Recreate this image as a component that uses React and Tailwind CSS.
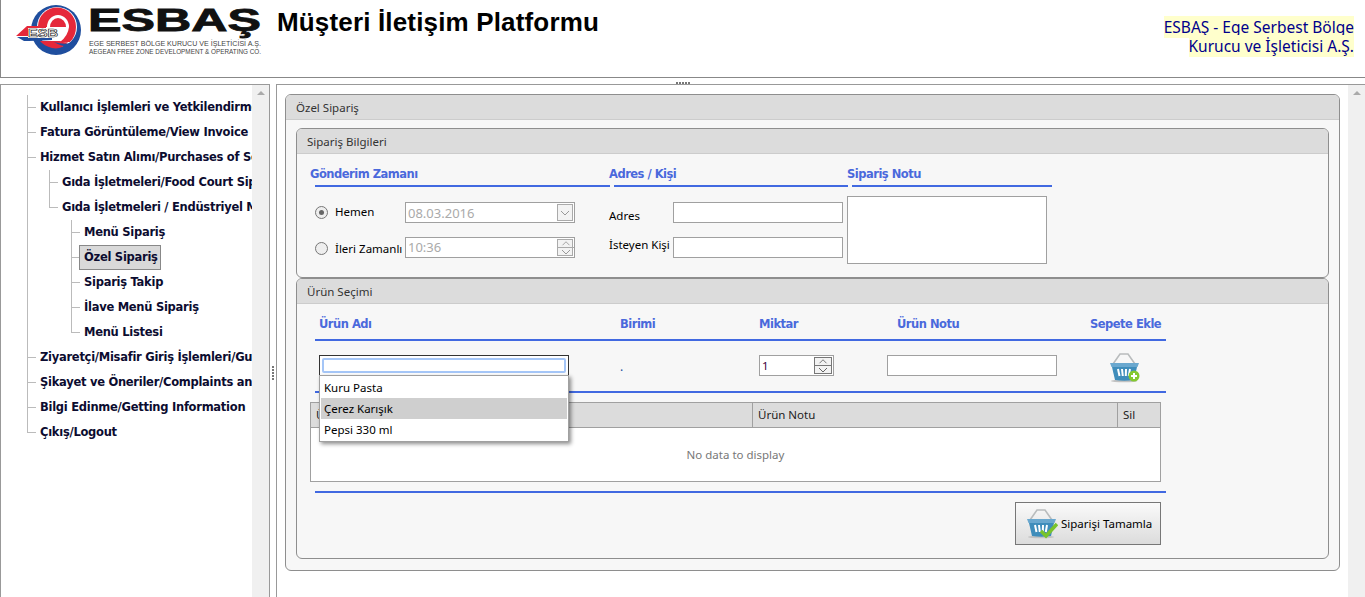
import React from "react";

const sans = "font-['Noto_Sans','Liberation_Sans',sans-serif]";

function Logo() {
  return (
    <svg width="250" height="60" viewBox="0 0 250 60" className="block">
      <circle cx="40" cy="30" r="25" fill="#1f4e9e" />
      <circle cx="41" cy="27" r="20" fill="#fff" />
      <path d="M22 26 A19 19 0 0 1 60 27 Q60 36 54 42 L44 42 Q52 36 53 27 A11 12 0 0 0 31 27 L30 27 Z" fill="#e5283a" />
      <path d="M34 27 A8 9 0 0 1 50 27 L34 27Z" fill="#e5283a" />
      <path d="M24 41 H44 Q48 43 52 42 Q46 50 36 48 Q28 46 24 41Z" fill="#e5283a" />
      <path d="M0 36 L11 26 H30 V29 H16 L12 36Z" fill="#e5283a" />
      <path d="M1 37 H36 V40 Q16 41 8 41Z" fill="#1f4e9e" />
      <path d="M38 42 Q50 46 62 41 L58 46 Q48 48 38 42Z" fill="#1f4e9e" />
      <rect x="12" y="28" width="30" height="10" fill="#fff" />
      <text x="12" y="37" fontFamily="Liberation Sans" fontWeight="700" fontSize="11" textLength="30" lengthAdjust="spacingAndGlyphs" fill="#fff" stroke="#222" strokeWidth=".6">ESB</text>
      <text x="72" y="31" fontFamily="Liberation Sans" fontWeight="700" fontSize="31" textLength="173" lengthAdjust="spacingAndGlyphs" stroke="#111" strokeWidth=".8" fill="#111">ESBAŞ</text>
      <text x="73" y="46" fontFamily="Liberation Sans" fontSize="8" textLength="172" lengthAdjust="spacingAndGlyphs" fill="#444">EGE SERBEST BÖLGE KURUCU VE İŞLETİCİSİ A.Ş.</text>
      <text x="73" y="54" fontFamily="Liberation Sans" fontSize="8" textLength="172" lengthAdjust="spacingAndGlyphs" fill="#444">AEGEAN FREE ZONE DEVELOPMENT &amp; OPERATING CO.</text>
    </svg>
  );
}

function Basket({ check }) {
  return (
    <svg width="32" height="32" viewBox="0 0 32 32" className="block">
      <path d="M4 12 L11 2 H19 L26 12" fill="none" stroke="#b9bcbd" strokeWidth="1.6" />
      <ellipse cx="15" cy="29" rx="13" ry="1.3" fill="#c2c2c2" />
      <path d="M1 11 H30 L28.5 15 H2.5Z" fill="#6aa8cf" />
      <path d="M3 15 H28 L25 28 Q15 29.5 6 28Z" fill="#3f8dbb" />
      <path d="M9 17 L10.5 24 M13 17 L13.8 24 M17 17 L16.8 24 M21 17 L19.8 24" stroke="#fff" strokeWidth="2" />
      {check ? (
        <path d="M15 23 L20 28 L31 16" fill="none" stroke="#79c32c" strokeWidth="3.5" />
      ) : (
        <g>
          <circle cx="25" cy="24" r="5.5" fill="#84c92f" />
          <path d="M22 24 H28 M25 21 V27" stroke="#fff" strokeWidth="2" />
        </g>
      )}
    </svg>
  );
}

function Tick({ last, children }) {
  return (
    <div className="flex h-[25px] items-start">
      <span className={last ? "-ml-px block h-[13px] w-[9px] shrink-0 border-b border-l border-[#bbb]" : "mt-[12px] block h-px w-[8px] shrink-0 bg-[#bbb]"} />
      {children}
    </div>
  );
}

function Label({ children, selected }) {
  return selected ? (
    <span className="-ml-px block h-[25px] border border-[#888] bg-[#d9d9d9] pl-[4px] pr-[2px] leading-[23px]">{children}</span>
  ) : (
    <span className="ml-[4px] block leading-[25px]">{children}</span>
  );
}

function Node({ text, last, selected, kids }) {
  return (
    <li className={last ? "pl-px" : "border-l border-[#bbb]"}>
      <Tick last={last}><Label selected={selected}>{text}</Label></Tick>
      {kids && <ul className="ml-[21px]">{kids}</ul>}
    </li>
  );
}

function Section({ title, className, children }) {
  return (
    <div className={"overflow-hidden rounded-[6px] border border-[#8e8e8e] bg-[#f7f7f7] " + className}>
      <div className="h-[25px] border-b border-[#ccc] bg-[#dcdcdc] pl-[10px] text-[11.5px] leading-[25px] text-[#333]">{title}</div>
      {children}
    </div>
  );
}

const heading = "font-['DejaVu_Sans',sans-serif] text-[11.5px] font-bold tracking-[-0.5px] leading-[16px] text-[#4a69dc]";
const field = "block h-[21px] border border-[#a0a0a0] bg-white";
const rule = "h-[2px] bg-[#4169e1]";

function Spin({ dark, wide }) {
  const c = dark ? "#666" : "#999";
  return (
    <span className={"flex h-[17px] flex-col border bg-[#f3f3f3] " + (dark ? "border-[#777] " : "border-[#aaa] ") + (wide ? "w-[18px]" : "w-[16px]")}>
      <svg width="16" height="8" viewBox="0 0 16 8" className={"block border-b " + (dark ? "border-[#777]" : "border-[#aaa]")}><path d="M4 6 L8 2 L12 6" fill="none" stroke={c} /></svg>
      <svg width="16" height="7" viewBox="0 0 16 7" className="block"><path d="M4 2 L8 6 L12 2" fill="none" stroke={c} /></svg>
    </span>
  );
}

function GreyField({ value, children, textClass }) {
  return (
    <span className="flex h-[21px] w-[170px] items-center justify-between border border-[#a0a0a0] bg-white pl-[2px] pr-px font-['Noto_Sans',sans-serif] text-[13px] text-[#aaa]">
      <span className={textClass}>{value}</span>
      {children}
    </span>
  );
}

export default function App() {
  return (
    <div className={"flex h-[597px] w-[1365px] flex-col overflow-hidden bg-white text-black " + sans}>
      <header className="flex h-[78px] shrink-0 border-b border-l border-[#888] bg-white">
        <div className="ml-[15px] w-[250px] shrink-0"><Logo /></div>
        <h1 className="ml-[11px] mt-[7px] font-['Liberation_Sans',sans-serif] text-[26px] font-bold leading-[30px] tracking-[0.16px]">Müşteri İletişim Platformu</h1>
        <div className="ml-auto mr-[11px] mt-[18px] text-right text-[15.5px] leading-[19px] text-[#00008b]">
          <div><span className="bg-[#ffffcc]">ESBAŞ - Ege Serbest Bölge</span></div>
          <div><span className="bg-[#ffffcc]">Kurucu ve İşleticisi A.Ş.</span></div>
        </div>
      </header>
      <div className="flex h-[6px] shrink-0 items-center justify-center">
        <span className="mt-[4px] h-[2px] w-[14px] bg-[repeating-linear-gradient(90deg,#777_0_2px,transparent_2px_3px)]" />
      </div>
      <div className="flex min-h-0 flex-1">
        <aside className="flex w-[270px] shrink-0 border-l border-r border-t border-[#999]">
          <nav className="min-w-0 flex-1 overflow-hidden whitespace-nowrap pt-[10px] font-['DejaVu_Sans',sans-serif] text-[11.5px] font-bold tracking-[-0.27px] text-[#0c0c30]">
            <ul className="ml-[26px]">
              <Node text="Kullanıcı İşlemleri ve Yetkilendirme İşlemleri" />
              <Node text="Fatura Görüntüleme/View Invoice" />
              <Node text="Hizmet Satın Alımı/Purchases of Services" kids={<>
                <Node text="Gıda İşletmeleri/Food Court Sipariş" />
                <Node last text="Gıda İşletmeleri / Endüstriyel Mutfak" kids={<>
                  <Node text="Menü Sipariş" />
                  <Node text="Özel Sipariş" selected />
                  <Node text="Sipariş Takip" />
                  <Node text="İlave Menü Sipariş" />
                  <Node last text="Menü Listesi" />
                </>} />
              </>} />
              <Node text="Ziyaretçi/Misafir Giriş İşlemleri/Guest" />
              <Node text="Şikayet ve Öneriler/Complaints and Suggestions" />
              <Node text="Bilgi Edinme/Getting Information" />
              <Node last text="Çıkış/Logout" />
            </ul>
          </nav>
          <div className="flex w-[17px] shrink-0 justify-center bg-[#f0f0f0] pt-[6px]">
            <span className="h-0 w-0 border-x-[4px] border-b-[4px] border-x-transparent border-b-[#aaa]" />
          </div>
        </aside>
        <div className="flex w-[6px] shrink-0 items-center justify-center pt-[64px]">
          <span className="h-[14px] w-[2px] bg-[repeating-linear-gradient(180deg,#777_0_2px,transparent_2px_3px)]" />
        </div>
        <main className="flex min-w-0 flex-1 border-l border-t border-[#999]">
          <div className="min-w-0 flex-1 pl-[8px] pr-[8px] pt-[9px]">
            <Section title="Özel Sipariş" className="h-[477px]">
              <div className="px-[10px] pt-[8px]">
                <Section title="Sipariş Bilgileri" className="h-[150px]">
                  <div className="flex pl-[13px] pt-[12px]">
                    <div className="w-[299px] shrink-0">
                      <div className={heading}>Gönderim Zamanı</div>
                      <div className={"ml-[5px] mt-[3px] w-[295px] " + rule} />
                      <div className="mt-[15px] flex h-[21px] items-center text-[11.5px]">
                        <span className="ml-[5px] flex h-[13px] w-[13px] items-center justify-center rounded-full border border-[#777] bg-[#eee]"><span className="h-[5px] w-[5px] rounded-full bg-[#666]" /></span>
                        <span className="ml-[7px] w-[70px] pb-[2px]">Hemen</span>
                        <GreyField value="08.03.2016" textClass="pt-[2px]">
                          <span className="flex h-[17px] w-[16px] items-center justify-center border border-[#aaa] bg-[#f3f3f3]">
                            <svg width="10" height="6" viewBox="0 0 10 6"><path d="M1 1 L5 5 L9 1" fill="none" stroke="#999" /></svg>
                          </span>
                        </GreyField>
                      </div>
                      <div className="mt-[14px] flex h-[21px] items-center text-[11.5px]">
                        <span className="ml-[5px] mt-[2px] h-[13px] w-[13px] rounded-full border border-[#777] bg-[#eee]" />
                        <span className="ml-[7px] w-[70px] whitespace-nowrap pt-[2px]">İleri Zamanlı</span>
                        <GreyField value="10:36"><Spin /></GreyField>
                      </div>
                    </div>
                    <div className="w-[238px] shrink-0">
                      <div className={heading}>Adres / Kişi</div>
                      <div className={"ml-[5px] mt-[3px] w-[234px] " + rule} />
                      <div className="mt-[15px] flex h-[21px] items-start text-[11.5px]">
                        <span className="w-[64px] pt-[6px] leading-[16px]">Adres</span>
                        <span className={field + " w-[170px]"} />
                      </div>
                      <div className="mt-[14px] flex h-[21px] items-start text-[11.5px]">
                        <span className="w-[64px] whitespace-nowrap leading-[16px]">İsteyen Kişi</span>
                        <span className={field + " w-[170px]"} />
                      </div>
                    </div>
                    <div className="w-[205px] shrink-0">
                      <div className={heading}>Sipariş Notu</div>
                      <div className={"ml-[5px] mt-[3px] w-[200px] " + rule} />
                      <div className="mt-[9px] h-[68px] w-[200px] border border-[#a0a0a0] bg-white" />
                    </div>
                  </div>
                </Section>
                <Section title="Ürün Seçimi" className="h-[281px]">
                  <div className="ml-[18px] w-[851px] pt-[12px]">
                    <div className="grid grid-cols-[301px_139px_138px_193px_72px] pl-[4px]">
                      <div className={heading}>Ürün Adı</div>
                      <div className={heading}>Birimi</div>
                      <div className={heading}>Miktar</div>
                      <div className={heading}>Ürün Notu</div>
                      <div className={heading + " whitespace-nowrap"}>Sepete Ekle</div>
                    </div>
                    <div className={"mt-[7px] " + rule} />
                    <div className="mt-[14px] grid h-[21px] grid-cols-[301px_139px_138px_193px_72px] pl-[4px]">
                      <div className="relative">
                        <div className="flex h-[21px] w-[250px] items-center justify-center border border-[#333] bg-white">
                          <span className="block h-[15px] w-[244px] rounded-[2px] border-2 border-[#a5c6f7] bg-white" />
                        </div>
                        <div className="absolute left-0 top-[20px] z-10 w-[250px] border border-[#a0a0a0] bg-white p-px text-[11.5px] shadow-[2px_2px_4px_rgba(0,0,0,0.45)]">
                          <div className="h-[21px] pl-[3px] leading-[21px]">Kuru Pasta</div>
                          <div className="h-[21px] bg-[#cfcfcf] pl-[3px] leading-[21px]">Çerez Karışık</div>
                          <div className="h-[21px] pl-[3px] leading-[21px]">Pepsi 330 ml</div>
                        </div>
                      </div>
                      <div className="pt-[3px] text-[12px] leading-[18px] text-[#23509c]">.</div>
                      <div className="flex h-[21px] w-[75px] items-center justify-between border border-[#a0a0a0] bg-white pl-[2px] pr-px text-[11.5px] text-[#400040]">
                        1
                        <Spin dark wide />
                      </div>
                      <div className="-ml-[10px]"><span className={field + " w-[170px]"} /></div>
                      <div className="ml-[19px] -mt-[3px]"><Basket /></div>
                    </div>
                    <div className={"mt-[15px] " + rule} />
                    <div className="-ml-[5px] mt-[9px] h-[80px] w-[851px] border border-[#a0a0a0] bg-white text-[11.5px]">
                      <div className="grid h-[25px] grid-cols-[442px_365px_1fr] border-b border-[#a0a0a0] bg-[#dcdcdc] leading-[24px] text-[#222]">
                        <div className="border-r border-[#a0a0a0] pl-[5px]">Ürün Adı</div>
                        <div className="border-r border-[#a0a0a0] pl-[5px]">Ürün Notu</div>
                        <div className="pl-[5px]">Sil</div>
                      </div>
                      <div className="flex h-[53px] items-center justify-center text-[#777]">No data to display</div>
                    </div>
                    <div className={"mt-[9px] " + rule} />
                    <button className="ml-[700px] mt-[9px] flex h-[43px] w-[146px] items-center border border-[#777] bg-gradient-to-b from-[#fafafa] to-[#dcdcdc] pl-[10px] text-[11.5px]">
                      <Basket check />
                      <span className="ml-[3px] whitespace-nowrap">Siparişi Tamamla</span>
                    </button>
                  </div>
                </Section>
              </div>
            </Section>
          </div>
          <div className="flex w-[17px] shrink-0 justify-center bg-[#f0f0f0] pt-[6px]">
            <span className="h-0 w-0 border-x-[4px] border-b-[4px] border-x-transparent border-b-[#aaa]" />
          </div>
        </main>
      </div>
    </div>
  );
}
